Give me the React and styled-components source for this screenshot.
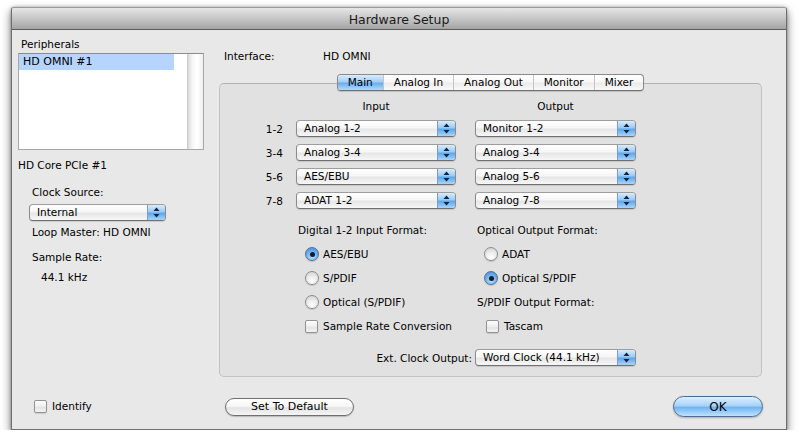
import React from 'react'
import styled, { createGlobalStyle } from 'styled-components'

const GlobalStyle = createGlobalStyle`
    html, body {
        margin: 0;
        padding: 0;
        background: #ffffff;
    }
    body {
        font-family: "DejaVu Sans", "Liberation Sans", sans-serif;
        font-size: 10.5px;
        color: #000;
    }
`

const Arrows = () => (
    <svg width="7" height="11" viewBox="0 0 7 11">
        <path d="M3.5 0.5 L6.5 4 L0.5 4 Z" fill="#14223c" />
        <path d="M0.5 7 L6.5 7 L3.5 10.5 Z" fill="#14223c" />
    </svg>
)

const PopUp = ({ value, width }) => (
    <Select $width={width}>
        <SelectText>{value}</SelectText>
        <SelectCap>
            <Arrows />
        </SelectCap>
    </Select>
)

const Radio = ({ checked, children }) => (
    <Option>
        <RadioDot $checked={checked}>{checked && <Dot />}</RadioDot>
        <span>{children}</span>
    </Option>
)

const Check = ({ children, indent }) => (
    <Option $indent={indent}>
        <Box />
        <span>{children}</span>
    </Option>
)

const rows = [
    ['1-2', 'Analog 1-2', 'Monitor 1-2'],
    ['3-4', 'Analog 3-4', 'Analog 3-4'],
    ['5-6', 'AES/EBU', 'Analog 5-6'],
    ['7-8', 'ADAT 1-2', 'Analog 7-8'],
]

const tabs = ['Main', 'Analog In', 'Analog Out', 'Monitor', 'Mixer']

const App = () => {
    return (
        <>
            <GlobalStyle />
            <Window>
                <TitleBar>Hardware Setup</TitleBar>
                <Body>
                    <LeftPart>
                        <ListLabel>Peripherals</ListLabel>
                        <ListBox>
                            <ListItems>
                                <ListRow $selected>HD OMNI #1</ListRow>
                            </ListItems>
                            <ScrollTrack />
                        </ListBox>
                        <Text $top={8}>HD Core PCIe #1</Text>
                        <Text $top={13} $indent={14}>Clock Source:</Text>
                        <SelectHolder $top={5} $indent={11}>
                            <PopUp value="Internal" width={137} />
                        </SelectHolder>
                        <Text $top={4} $indent={14}>Loop Master: HD OMNI</Text>
                        <Text $top={11} $indent={14}>Sample Rate:</Text>
                        <Text $top={6} $indent={23}>44.1 kHz</Text>
                    </LeftPart>

                    <RightPart>
                        <InterfaceRow>
                            <InterfaceLabel>Interface:</InterfaceLabel>
                            <span>HD OMNI</span>
                        </InterfaceRow>
                        <TabBar>
                            {tabs.map((t) => (
                                <Tab key={t} $active={t === 'Main'}>{t}</Tab>
                            ))}
                        </TabBar>
                        <GroupBox>
                            <HeadRow>
                                <ColHead $width={160}>Input</ColHead>
                                <ColHead $width={161}>Output</ColHead>
                            </HeadRow>
                            <Rows>
                                {rows.map(([label, input, output]) => (
                                    <Row key={label}>
                                        <RowLabel>{label}</RowLabel>
                                        <PopUp value={input} width={160} />
                                        <PopUp value={output} width={161} />
                                    </Row>
                                ))}
                            </Rows>
                            <Formats>
                                <FormatCol $width={179}>
                                    <FormatTitle>Digital 1-2 Input Format:</FormatTitle>
                                    <Radio checked>AES/EBU</Radio>
                                    <Radio>S/PDIF</Radio>
                                    <Radio>Optical (S/PDIF)</Radio>
                                    <Check>Sample Rate Conversion</Check>
                                </FormatCol>
                                <FormatCol>
                                    <FormatTitle>Optical Output Format:</FormatTitle>
                                    <Radio>ADAT</Radio>
                                    <Radio checked>Optical S/PDIF</Radio>
                                    <FormatTitle>S/PDIF Output Format:</FormatTitle>
                                    <Check indent={9}>Tascam</Check>
                                </FormatCol>
                            </Formats>
                            <ClockRow>
                                <ClockLabel>Ext. Clock Output:</ClockLabel>
                                <PopUp value="Word Clock (44.1 kHz)" width={161} />
                            </ClockRow>
                        </GroupBox>
                    </RightPart>

                    <FooterLeft>
                        <Check>Identify</Check>
                    </FooterLeft>
                    <FooterRight>
                        <PillButton>Set To Default</PillButton>
                        <OkButton>OK</OkButton>
                    </FooterRight>
                </Body>
            </Window>
        </>
    )
}

export default App

const Window = styled.div`
    width: 776px;
    height: 423px;
    margin: 7px 0 0 11px;
    box-sizing: border-box;
    border: 1px solid #6e6e6e;
    border-top-color: #9a9a9a;
    background: #e8e8e8;
    box-shadow: 0 4px 10px rgba(0, 0, 0, 0.55), 0 0 3px rgba(0, 0, 0, 0.3);
    display: flex;
    flex-direction: column;
    border-radius: 3px 3px 0 0;
    overflow: hidden;
`
const TitleBar = styled.div`
    height: 22px;
    box-sizing: border-box;
    border-bottom: 1px solid #5a5a5a;
    background: linear-gradient(#e6e6e6, #c9c9c9 45%, #a4a4a4);
    display: flex;
    align-items: center;
    justify-content: center;
    font-size: 12.5px;
    color: #1a1a1a;
    padding-top: 1px;
`
const Body = styled.div`
    flex: 1;
    display: grid;
    grid-template-columns: 207px 543px;
    grid-template-rows: 347px 52px;
`
const LeftPart = styled.div`
    padding: 7px 0 0 6px;
    display: flex;
    flex-direction: column;
    align-items: flex-start;
`
const ListLabel = styled.div`
    line-height: 14px;
    padding-left: 3px;
`
const ListBox = styled.div`
    margin-top: 2px;
    width: 186px;
    height: 97px;
    box-sizing: border-box;
    border: 1px solid #a8a8a8;
    border-top-color: #8c8c8c;
    background: #fff;
    display: flex;
`
const ListItems = styled.div`
    flex: 1;
`
const ListRow = styled.div`
    width: 155px;
    height: 16px;
    line-height: 16px;
    padding-left: 4px;
    box-sizing: border-box;
    font-size: 11px;
    background: ${(p) => (p.$selected ? '#b5d5ff' : 'transparent')};
`
const ScrollTrack = styled.div`
    width: 16px;
    background: linear-gradient(to right, #c4c4c4, #e4e4e4 2px, #f8f8f8 6px, #ffffff 10px, #eeeeee);
`
const Text = styled.div`
    line-height: 14px;
    margin-top: ${(p) => p.$top || 0}px;
    padding-left: ${(p) => p.$indent || 0}px;
    white-space: nowrap;
`
const SelectHolder = styled.div`
    margin-top: ${(p) => p.$top || 0}px;
    padding-left: ${(p) => p.$indent || 0}px;
`
const Select = styled.div`
    width: ${(p) => p.$width}px;
    height: 17px;
    box-sizing: border-box;
    border: 1px solid #8b8b8b;
    border-top-color: #9d9d9d;
    border-bottom-color: #6f6f6f;
    border-radius: 4px;
    background: linear-gradient(#ffffff, #f6f6f6 45%, #e6e6e6 55%, #f7f7f7);
    display: flex;
    align-items: stretch;
    overflow: hidden;
    box-shadow: 0 1px 1px rgba(0, 0, 0, 0.12);
`
const SelectText = styled.div`
    flex: 1;
    padding-left: 7px;
    line-height: 15px;
    white-space: nowrap;
    overflow: hidden;
`
const SelectCap = styled.div`
    width: 17px;
    border-left: 1px solid #7d9dc4;
    background: linear-gradient(#d8ecfd, #9ccaf6 45%, #5ea6ec 55%, #a7d5fb);
    display: flex;
    align-items: center;
    justify-content: center;
`
const RightPart = styled.div`
    padding-top: 19px;
    display: flex;
    flex-direction: column;
`
const InterfaceRow = styled.div`
    display: flex;
    line-height: 14px;
    padding-left: 5px;
`
const InterfaceLabel = styled.span`
    width: 99px;
`
const TabBar = styled.div`
    position: relative;
    z-index: 1;
    align-self: center;
    margin-top: 11px;
    display: flex;
    height: 17px;
    box-sizing: border-box;
    border: 1px solid #8a8a8a;
    border-bottom-color: #6e6e6e;
    border-radius: 4px;
    overflow: hidden;
    background: linear-gradient(#ffffff, #f8f8f8 45%, #ebebeb 55%, #fafafa);
    box-shadow: 0 1px 1px rgba(0, 0, 0, 0.15);
`
const Tab = styled.div`
    padding: 0 10px;
    line-height: 15px;
    border-left: 1px solid #c4c4c4;
    white-space: nowrap;
    background: ${(p) =>
        p.$active ? 'linear-gradient(#d9ecfd, #a3cef6 45%, #6aaeee 55%, #b3dafb)' : 'transparent'};

    &:first-child {
        border-left: none;
    }
`
const GroupBox = styled.div`
    flex: 1;
    margin-top: -8px;
    padding: 15px 0 0 29px;
    box-sizing: border-box;
    border: 1px solid #c2c2c2;
    border-top-color: #b3b3b3;
    border-radius: 5px;
    background: #e1e1e1;
`
const HeadRow = styled.div`
    display: flex;
    gap: 19px;
    padding-left: 47px;
    line-height: 14px;
`
const ColHead = styled.div`
    width: ${(p) => p.$width}px;
    text-align: center;
`
const Rows = styled.div`
    margin-top: 7px;
    display: flex;
    flex-direction: column;
    gap: 7px;
`
const Row = styled.div`
    display: flex;
    align-items: center;
    gap: 19px;
    & > div:nth-child(2) {
        margin-left: -19px;
    }
`
const RowLabel = styled.div`
    width: 34px;
    padding-right: 13px;
    text-align: right;
`
const Formats = styled.div`
    display: flex;
    padding-left: 49px;
    margin-top: 9px;
`
const FormatCol = styled.div`
    width: ${(p) => (p.$width ? `${p.$width}px` : 'auto')};
    display: flex;
    flex-direction: column;
`
const FormatTitle = styled.div`
    height: 24px;
    line-height: 24px;
    white-space: nowrap;
`
const Option = styled.div`
    height: 24px;
    display: flex;
    align-items: center;
    padding-left: ${(p) => (p.$indent !== undefined ? p.$indent : 7)}px;
    white-space: nowrap;
`
const RadioDot = styled.div`
    width: 14px;
    height: 14px;
    box-sizing: border-box;
    border-radius: 50%;
    margin-right: 4px;
    border: 1px solid ${(p) => (p.$checked ? '#56708f' : '#8d8d8d')};
    background: ${(p) =>
        p.$checked
            ? 'radial-gradient(circle at 50% 75%, #b6dcfc, #6aaeef 55%, #3f86d6)'
            : 'radial-gradient(circle at 50% 80%, #ffffff, #ececec 50%, #c9c9c9)'};
    box-shadow: 0 1px 1px rgba(0, 0, 0, 0.15);
    display: flex;
    align-items: center;
    justify-content: center;
`
const Dot = styled.div`
    width: 5px;
    height: 5px;
    border-radius: 50%;
    background: #0f1d33;
`
const Box = styled.div`
    width: 13px;
    height: 13px;
    box-sizing: border-box;
    margin-right: 5px;
    border: 1px solid #929292;
    border-radius: 2px;
    background: linear-gradient(#fdfdfd, #eeeeee 50%, #e2e2e2 55%, #f4f4f4);
    box-shadow: 0 1px 1px rgba(0, 0, 0, 0.12);
`
const ClockRow = styled.div`
    margin-top: 11px;
    display: flex;
    align-items: center;
    gap: 3px;
`
const ClockLabel = styled.div`
    width: 223px;
    text-align: right;
    white-space: nowrap;
`
const FooterLeft = styled.div`
    padding: 22px 0 0 15px;
    & > div {
        height: 14px;
    }
`
const FooterRight = styled.div`
    display: flex;
    justify-content: space-between;
    align-items: center;
    padding: 7px 0 0 6px;
    margin-right: -1px;
`
const PillButton = styled.div`
    width: 129px;
    height: 18px;
    box-sizing: border-box;
    border: 1px solid #6f6f6f;
    border-radius: 9px;
    background: linear-gradient(#ffffff, #f7f7f7 45%, #e4e4e4 55%, #f5f5f5);
    box-shadow: 0 1px 1px rgba(0, 0, 0, 0.2);
    display: flex;
    align-items: center;
    justify-content: center;
    font-size: 11px;
`
const OkButton = styled.div`
    width: 90px;
    height: 21px;
    box-sizing: border-box;
    border: 1px solid #4b6a94;
    border-radius: 11px;
    background: linear-gradient(#dcefff, #a9d3fa 45%, #71b5f1 55%, #bfe3fd);
    box-shadow: 0 1px 2px rgba(0, 0, 0, 0.25);
    display: flex;
    align-items: center;
    justify-content: center;
    font-size: 12px;
`
